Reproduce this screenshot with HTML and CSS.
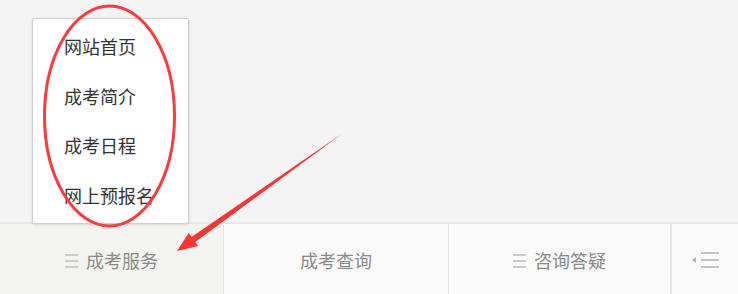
FILE: index.html
```html
<!DOCTYPE html>
<html lang="zh">
<head>
<meta charset="utf-8">
<link rel="stylesheet" href="styles.css">
</head>
<body>
<div class="page">
  <div class="stage"></div>
  <nav class="bar">
    <div class="tab tab-active"><span class="burger"><i></i><i></i><i></i></span>成考服务</div>
    <div class="tab">成考查询</div>
    <div class="tab"><span class="burger"><i></i><i></i><i></i></span>咨询答疑</div>
    <div class="tab tab-more">
      <span class="tri"></span><span class="burger burger-lg"><i></i><i></i><i></i></span>
    </div>
  </nav>
  <ul class="menu">
    <li>网站首页</li>
    <li>成考简介</li>
    <li>成考日程</li>
    <li>网上预报名</li>
  </ul>
  <svg class="annot" width="738" height="294" viewBox="0 0 738 294">
    <ellipse cx="109.5" cy="116" rx="65" ry="110" fill="none" stroke="#ff3b3b" stroke-width="3"/>
    <polygon points="343,133 195.2,242 198,246 177,251 188.7,232.9 191.5,237 " fill="#ff3333"/>
  </svg>
</div>
</body>
</html>
```
FILE: styles.css
```css
html, body {
  margin: 0;
  padding: 0;
}
body {
  background: #f4f4f4;
  font-family: "Noto Sans CJK SC", "Noto Sans", sans-serif;
}
.page {
  position: relative;
  width: 738px;
  height: 294px;
  display: flex;
  flex-direction: column;
  overflow: hidden;
}
.stage {
  height: 222px;
  flex: none;
}
.bar {
  flex: 1;
  display: grid;
  grid-template-columns: 223px 225px 222px 1fr;
  border-top: 2px solid #e6e6e6;
  background: #fafafa;
}
.tab {
  display: flex;
  align-items: center;
  justify-content: center;
  font-size: 18px;
  color: #8a8a8a;
  border-left: 1px solid #e6e6e6;
  padding-top: 1px;
  line-height: 1;
}
.tab:first-child {
  border-left: none;
}
.tab-active {
  background: #f3f3ef;
}
.burger {
  display: inline-flex;
  flex-direction: column;
  gap: 4px;
  width: 13px;
  margin-right: 8px;
  margin-top: 3px;
}
.burger i {
  display: block;
  height: 2px;
  background: #cacaca;
}
.burger-lg {
  width: 18px;
  gap: 5px;
  margin: 0;
}
.burger-lg i {
  background: #c4c4c4;
}
.tab-more {
  justify-content: flex-start;
  padding-left: 20px;
  border-left: 2px solid #e6e6e6;
}
.tri {
  width: 0;
  height: 0;
  border-top: 3.5px solid transparent;
  border-bottom: 3.5px solid transparent;
  border-right: 4px solid #b5b5b5;
  margin-right: 5px;
}
.menu {
  position: absolute;
  left: 32px;
  top: 18px;
  width: 124px;
  height: 201px;
  margin: 0;
  padding: 3px 0 0 31px;
  box-sizing: content-box;
  list-style: none;
  background: #fff;
  border: 1px solid #cfcfcf;
  border-radius: 2px;
  box-shadow: 0 1px 3px rgba(0,0,0,0.12);
}
.menu li {
  height: 49.5px;
  line-height: 49.5px;
  font-size: 18px;
  color: #333;
  white-space: nowrap;
}
.annot {
  position: absolute;
  left: 0;
  top: 0;
  pointer-events: none;
}
```
